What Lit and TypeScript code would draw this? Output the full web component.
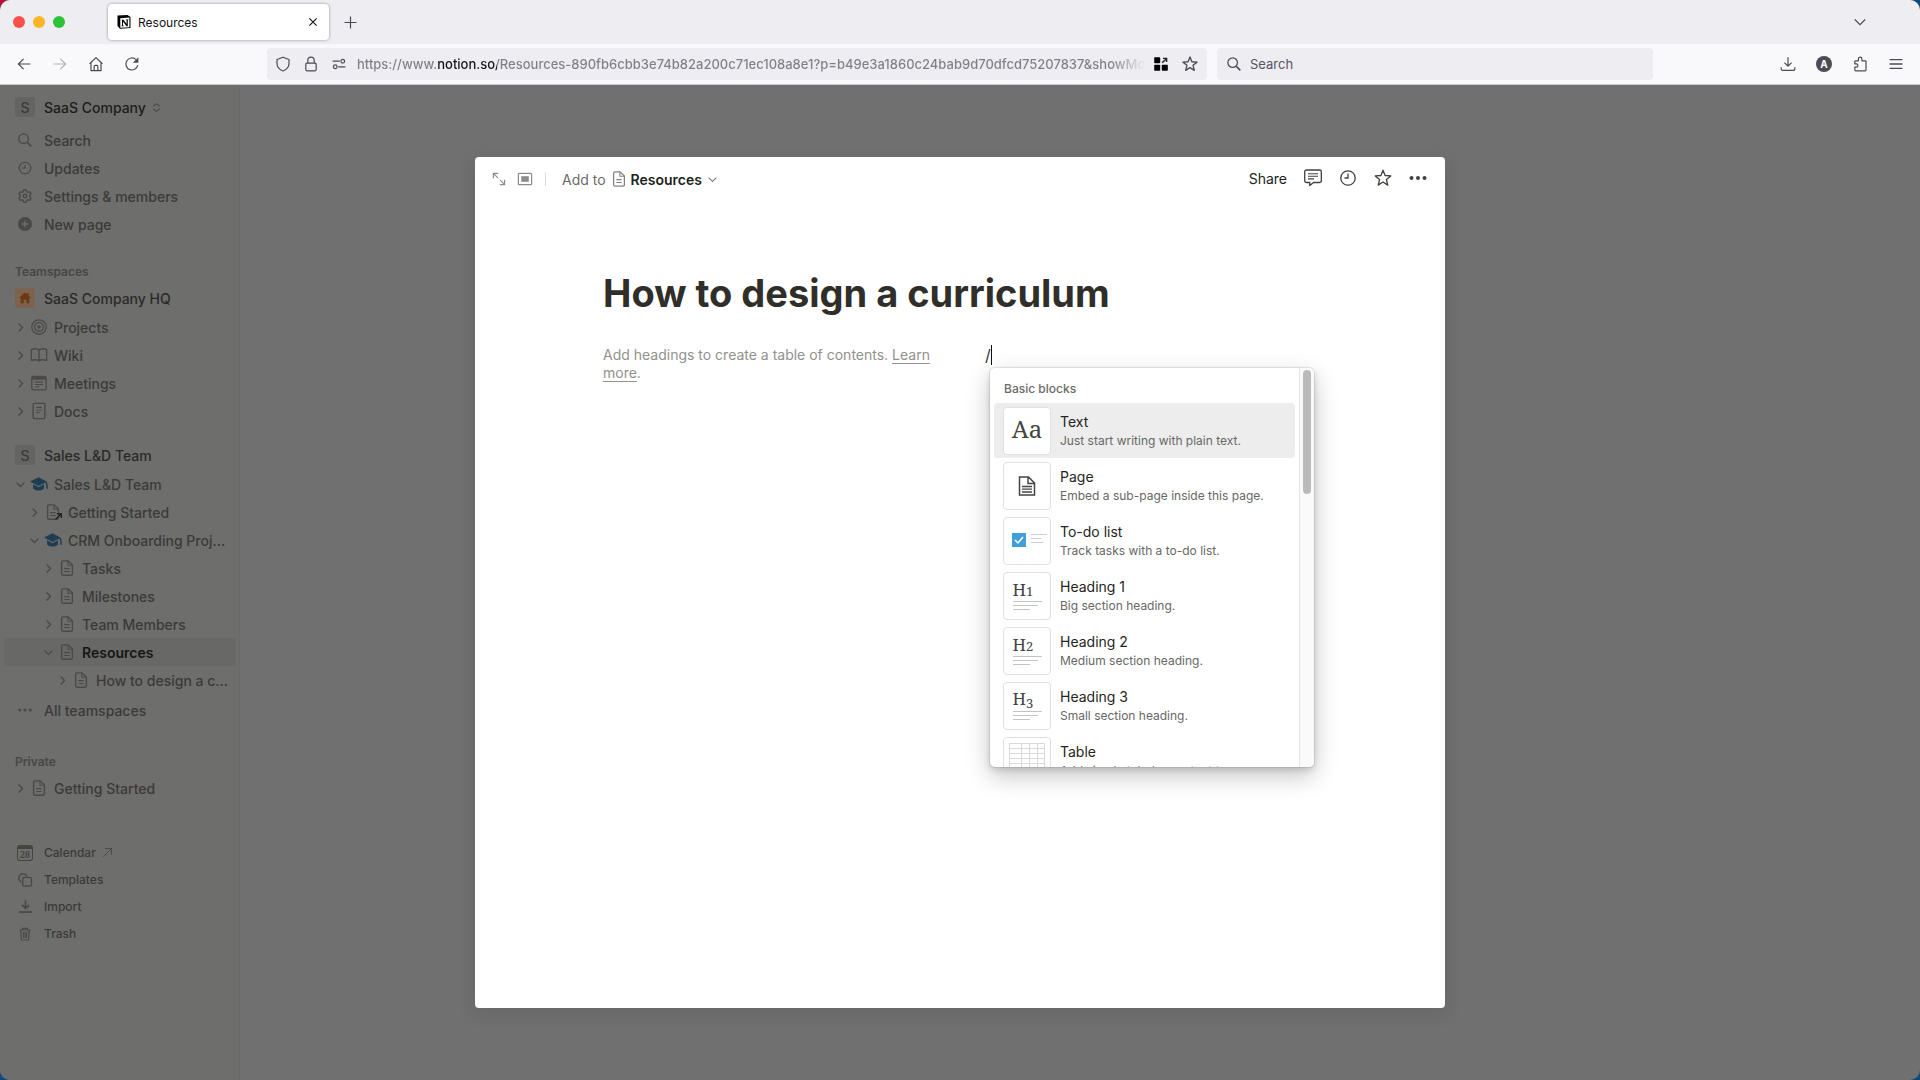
import { LitElement, html, svg, css, nothing, TemplateResult, SVGTemplateResult } from "lit";
import { customElement, property } from "lit/decorators.js";

const doc = svg`<path d="M5.500 2h5.700L16 6.800v9.700a1.500 1.500 0 0 1-1.500 1.500h-9A1.500 1.500 0 0 1 4 16.500v-13A1.500 1.500 0 0 1 5.500 2z"/><path d="M11 2.300V7h4.700M7 10.700h6M7 13.900h6" stroke-width="1.200"/>`;
const cap = svg`<g fill="currentColor" stroke="none"><path d="M9.500 2.600 0 7.200l9.500 4.900 7.600-3.800c.8 1.800 1.200 4.200 1.100 7h1.700c0-3.500-.6-6.200-1.700-8z"/><path d="M3.500 10.300v4.600c1.500 1.600 3.500 2.400 6 2.400s4.500-.8 6-2.400v-4.600l-6 3.200z"/></g>`;
const clock = svg`<circle cx="10" cy="10" r="7.200"/><path d="M10 5.500V10H6.500"/>`;
const star = svg`<path d="M10 2.200l2.100 5.300 5.700.4-4.400 3.600 1.400 5.600L10 14l-4.800 3.100 1.400-5.600-4.400-3.600 5.700-.4z" stroke-linejoin="round"/>`;

const icons: Record<string, SVGTemplateResult> = {
  doc,
  cap,
  clock,
  star,
  search: svg`<circle cx="8.500" cy="8.500" r="5.300"/><path d="M12.500 12.500 17 17" stroke-width="1.900"/>`,
  gear: svg`<path d="M8.700 3h2.600l.6 2 1.500.9 2-.5 1.300 2.200-1.400 1.600v1.700l1.400 1.500-1.300 2.300-2-.5-1.500.9-.6 2H8.700l-.6-2-1.500-.9-2 .5-1.300-2.300 1.400-1.500V9.200L3.300 7.600l1.300-2.200 2 .5L8.100 5z" stroke-linejoin="round"/><circle cx="10" cy="10.050" r="2"/>`,
  plusDisc: svg`<circle cx="10" cy="10" r="7" fill="currentColor" stroke="none"/><path d="M10 6.800v6.400M6.800 10h6.400" stroke="#6e6e6d" stroke-width="1.500"/>`,
  target: svg`<circle cx="10" cy="10" r="8"/><circle cx="10" cy="10" r="4.800"/><circle cx="10" cy="10" r="1.900" fill="currentColor" stroke="none"/>`,
  book: svg`<path d="M10 4.600C8 3 4.500 2.800 1.500 4v12c3-1 6.500-.9 8.500.6 2-1.500 5.500-1.600 8.500-.6V4c-3-1.200-6.500-1-8.500.6zM10 4.600v12" stroke-linejoin="round"/>`,
  meeting: svg`<rect x="2" y="2.800" width="16" height="14.900" rx="2"/><path d="M2.500 4.800h15" stroke-width="3.200"/><path d="M5.500 9h9M5.500 11.600h9M5.500 14.200h5" stroke-width="1.200"/>`,
  paper: svg`<rect x="3.500" y="1.500" width="13" height="17" rx="1.500"/><path d="M7 6h6M7 8.800h6M7 11.600h3.500" stroke-width="1.200"/>`,
  chevron: svg`<path d="M7.500 4.800 12.700 10l-5.200 5.200"/>`,
  chevronDown: svg`<path d="M4.800 7.500 10 12.700l5.200-5.200"/>`,
  updown: svg`<path d="M4 7.800 10 3l6 4.800M4 12.200l6 4.800 6-4.800"/>`,
  dots: svg`<g fill="currentColor" stroke="none"><circle cx="3.500" cy="10" r="2"/><circle cx="10" cy="10" r="2"/><circle cx="16.500" cy="10" r="2"/></g>`,
  stack: svg`<path d="M6 12.300A4.800 4.800 0 1 1 12.300 6"/><rect x="7.500" y="7" width="9.700" height="9.700" rx="1.800"/>`,
  importArrow: svg`<path d="M10 2.500v9.300M5.800 8 10 12.200 14.200 8" stroke-width="2"/><path d="M2.500 16.500h15" stroke-width="2"/>`,
  trash: svg`<path d="M3 5h14M7 4.800V3h6v1.800M4.700 5l.7 12.500h9.200L15.300 5"/><path d="M8 7.500v7.500M10 7.500v7.500M12 7.500v7.500" stroke-width="1.300"/>`,
  external: svg`<path d="M3.500 16.500 16 4M6.500 3.800H16.200v9.700"/>`,
  house: svg`<path d="M10 2 1.500 9.600h2.300V17.500h4.400v-5h3.600v5h4.400V9.600h2.300L15.500 6.900V3h-2.400v1.800z" fill="currentColor" stroke="none"/>`,
  expand: svg`<path d="M3 9V3h6M3.300 3.300 8.500 8.500M17 11v6h-6M16.700 16.700 11.500 11.500"/>`,
  peek: svg`<rect x="1.700" y="3" width="16.600" height="14" rx="1.200"/><rect x="5.300" y="6.500" width="9.400" height="7" fill="currentColor" stroke="none"/>`,
  comment: svg`<path d="M3.500 2h13a1.800 1.800 0 0 1 1.800 1.800v8.900a1.800 1.800 0 0 1-1.800 1.800h-6l-3.700 3v-3H3.500a1.800 1.800 0 0 1-1.800-1.800V3.800A1.800 1.800 0 0 1 3.500 2z" stroke-linejoin="round"/><path d="M5 5.700h10M5 8.300h10M5 10.900h6" stroke-width="1.100"/>`,
  back: svg`<path d="M18 10H3M9.500 3.500 3 10l6.500 6.500"/>`,
  forward: svg`<path d="M2 10h15M10.500 3.500 17 10l-6.500 6.500"/>`,
  home: svg`<path d="M2 9.700 10 2l8 7.700M3.700 8.500v9.700h12.600V8.500M7.700 18v-5a1.200 1.200 0 0 1 1.200-1.200h2.200a1.200 1.200 0 0 1 1.200 1.200v5" stroke-linejoin="round"/>`,
  reload: svg`<path d="M17.200 11.500A7.500 7.500 0 1 1 15 4.500"/><path d="M18 1.500v7h-7z" fill="currentColor" stroke="none"/>`,
  shield: svg`<path d="M10 1.500 2.500 4.300v5c0 4.200 3.200 7.600 7.500 9.400 4.300-1.800 7.500-5.200 7.500-9.400v-5z" stroke-linejoin="round"/>`,
  lock: svg`<rect x="3.500" y="8.800" width="13" height="9.700" rx="1.500"/><path d="M6 9V5.500a4 4 0 0 1 8 0V9"/>`,
  sliders: svg`<path d="M2 6.500h9M9 13.500h9"/><circle cx="14.700" cy="6.500" r="2.300"/><circle cx="5.300" cy="13.500" r="2.300"/>`,
  apps: svg`<g fill="#000" stroke="none"><rect x="1.500" y="1.500" width="7.500" height="7.500" rx="1"/><rect x="1.500" y="11" width="7.500" height="7.500" rx="1"/><rect x="11" y="11" width="7.500" height="7.500" rx="1"/></g><path d="M11.500 8.500 17 3M12.500 3H17v4.500" stroke="#222" stroke-width="1.800"/>`,
  download: svg`<path d="M10 1.500v11M5.500 8.200 10 12.700l4.500-4.500M1.500 14v2.200A1.800 1.800 0 0 0 3.300 18h13.400a1.800 1.800 0 0 0 1.800-1.800V14"/>`,
  puzzle: svg`<path d="M8 6V3.700a2.200 2.200 0 0 1 4.400 0V6H16.500a1 1 0 0 1 1 1v10.500a1 1 0 0 1-1 1H4.500a1 1 0 0 1-1-1v-3.700h1.900a2 2 0 0 0 0-4H3.500V7a1 1 0 0 1 1-1z" stroke-linejoin="round"/>`,
  menu: svg`<path d="M2 4.500h16M2 10h16M2 15.500h16"/>`,
  close: svg`<path d="M4 4l12 12M16 4 4 16"/>`,
  plus: svg`<path d="M10 2v16M2 10h16"/>`,
};

const icon = (name: string, size = 16, width = 1.5): TemplateResult => html`
  <svg width=${size} height=${size} viewBox="0 0 20 20" fill="none" stroke="currentColor" stroke-width=${width} aria-hidden="true">${icons[name]}</svg>`;

const shared = css`
  * { box-sizing: border-box; }
  button, input, a { font: inherit; color: inherit; }
  button { border: 0; padding: 0; background: none; display: inline-flex; align-items: center; justify-content: center; }
  svg { display: block; flex: none; }
`;

@customElement("browser-chrome")
class BrowserChrome extends LitElement {
  static styles = [shared, css`
    :host { display: block; color: #4c4b54; font-size: 13px; }
    .tabs { height: 44px; background: #eeedf2; display: flex; align-items: center; padding: 0 50px 0 13px; }
    .lights { display: flex; gap: 8px; width: 95px; }
    .light { width: 12px; height: 12px; border-radius: 50%; }
    .red { background: #f9524c; }
    .amber { background: #fcb427; }
    .green { background: #2ec23b; }
    .tab { width: 221px; height: 36px; border-radius: 4px; background: #fff; box-shadow: 0 0 3px rgba(0, 0, 0, .4); display: flex; align-items: center; gap: 6px; padding: 0 8px; color: #15141a; font-size: 12px; }
    .tab .name { flex: 1; }
    .close { width: 16px; height: 16px; }
    .plus { width: 20px; height: 20px; margin-left: 11px; }
    .list { margin-left: auto; width: 20px; height: 20px; }
    .bar { height: 40px; background: #f9f9fb; display: grid; grid-template-columns: 257px 940fr 436fr 257px; column-gap: 10px; align-items: center; }
    .group { display: flex; align-items: center; gap: 20px; padding-left: 16px; }
    .group.end { justify-content: flex-end; padding: 0 16px 0 0; }
    .faded { opacity: .4; }
    .field { height: 32px; border-radius: 4px; background: #eeedf2; display: flex; align-items: center; padding: 0 8px; gap: 12px; min-width: 0; }
    .field input { flex: 1; min-width: 0; border: 0; padding: 0; outline: 0; background: none; height: 24px; }
    .field .address { margin: 0 -4px 0 -2px; font-weight: 500; color: transparent; background: linear-gradient(90deg, #807f87 0 80px, #15141a 80px 140px, #807f87 140px calc(100% - 34px), transparent); background-clip: text; -webkit-background-clip: text; }
    .field.find { gap: 7px; }
    .field.find input::placeholder { color: #56555e; opacity: 1; }
    .account { width: 16px; height: 16px; border-radius: 50%; background: #4c4b54; color: #fff; font-size: 10px; font-weight: 700; }
  `];

  render() {
    return html`
      <div class="tabs">
        <div class="lights"><span class="light red"></span><span class="light amber"></span><span class="light green"></span></div>
        <div class="tab">
          <svg width="16" height="16" viewBox="0 0 16 16" aria-hidden="true">
            <path d="M1.500 1.500 11.500 1l3 2v11l-10.500.8L1.500 12z" fill="#000"/>
            <path d="M4.300 4.200 13.400 3.600v9.600l-9.100.6z" fill="#fff"/>
            <path d="M5.500 5.700h2L10.600 10V6.200l-.8-.2v-.6h2.700v.6l-.7.3v5.900h-1.300L7 7.500v4l.8.300v.5H5.400v-.5l.6-.3V6.500z" fill="#000"/>
          </svg>
          <span class="name">Resources</span>
          <button class="close" aria-label="Close tab">${icon("close", 12, 1.900)}</button>
        </div>
        <button class="plus" aria-label="New tab">${icon("plus", 15, 1.600)}</button>
        <button class="list" aria-label="List tabs">${icon("chevronDown", 20, 1.200)}</button>
      </div>
      <div class="bar">
        <div class="group">
          <button aria-label="Back">${icon("back")}</button>
          <button class="faded" aria-label="Forward">${icon("forward")}</button>
          <button aria-label="Home">${icon("home")}</button>
          <button aria-label="Reload">${icon("reload")}</button>
        </div>
        <div class="field">
          ${icon("shield")}${icon("lock")}${icon("sliders")}
          <input class="address" aria-label="Address" value="https://www.notion.so/Resources-890fb6cbb3e74b82a200c71ec108a8e1?p=b49e3a1860c24bab9d70dfcd75207837&showMoveTo=true" />
          <button aria-label="Extension">${icon("apps")}</button>
          <button aria-label="Bookmark">${icon("star", 18)}</button>
        </div>
        <div class="field find">${icon("search", 18, 1.400)}<input aria-label="Search" placeholder="Search" /></div>
        <div class="group end">
          <button aria-label="Downloads">${icon("download")}</button>
          <button class="account" aria-label="Account">A</button>
          <button aria-label="Extensions">${icon("puzzle")}</button>
          <button aria-label="Menu">${icon("menu", 16, 1.700)}</button>
        </div>
      </div>`;
  }
}

interface TreeItem { label: string; icon: string; level: number; open?: boolean; selected?: boolean; blue?: boolean; shortcut?: boolean; }

const company: TreeItem[] = [
  { label: "Projects", icon: "target", level: 0 },
  { label: "Wiki", icon: "book", level: 0 },
  { label: "Meetings", icon: "meeting", level: 0 },
  { label: "Docs", icon: "paper", level: 0 },
];
const sales: TreeItem[] = [
  { label: "Sales L&D Team", icon: "cap", level: 0, open: true, blue: true },
  { label: "Getting Started", icon: "doc", level: 1, shortcut: true },
  { label: "CRM Onboarding Proj…", icon: "cap", level: 1, open: true, blue: true },
  { label: "Tasks", icon: "doc", level: 2 },
  { label: "Milestones", icon: "doc", level: 2 },
  { label: "Team Members", icon: "doc", level: 2 },
  { label: "Resources", icon: "doc", level: 2, open: true, selected: true },
  { label: "How to design a c…", icon: "doc", level: 3 },
];

@customElement("side-bar")
class SideBar extends LitElement {
  static styles = [shared, css`
    :host { display: block; background: #6e6e6d; border-right: 1px solid #6a6a6a; padding: 8px 3px 72px 4px; color: #3b3a38; font-size: 14px; font-weight: 500; }
    nav { display: flex; flex-direction: column; }
    .row { height: 28px; width: 100%; padding-left: 10px; display: flex; justify-content: flex-start; align-items: center; gap: 8px; text-decoration: none; white-space: nowrap; border-radius: 3px; }
    .slot { width: 22px; display: flex; justify-content: center; color: #4a4947; flex: none; }
    .with-mark { display: flex; align-items: center; gap: 5px; }
    .with-mark svg { color: #4a4947; }
    .strong { color: #2b2a28; margin-bottom: 1px; }
    .company { color: #1d1c1b; margin-bottom: 5px; }
    .badge { width: 20px; height: 20px; border-radius: 3px; background: #646463; color: #3b3a38; display: flex; align-items: center; justify-content: center; margin: 0 1px; }
    .badge.hq { background: #7b6350; color: #6d3914; }
    h2 { margin: 0 0 0 11px; height: 24px; line-height: 24px; font-size: 12px; font-weight: 600; color: #484745; }
    .teams { margin-top: 22px; }
    .team { margin-top: 16px; }
    .all { margin-top: 2px; }
    .private { margin-top: 26px; }
    .tree .row { gap: 0; padding-left: 8px; }
    .twist { width: 16px; display: flex; justify-content: center; color: #4a4947; }
    .tree .slot { margin-right: 4px; position: relative; }
    .tree .blue { color: #1c3d52; }
    .selected { background: #686867; }
    .selected .text { color: #161615; font-weight: 600; }
    .arrow { position: absolute; right: 1px; bottom: 0; color: #111; }
    .foot { margin-top: 37px; }
    .foot .row { height: 27px; font-size: 12px; }
    .date { width: 16px; height: 16px; border: 1px solid #45443f; border-top-width: 4px; border-radius: 3px; font: 700 10px/11px "Liberation Serif", serif; text-align: center; color: #45443f; }
  `];

  private tree(items: TreeItem[]) {
    return html`<div class="tree">${items.map((i) => html`
      <a class="row ${i.selected ? "selected" : ""}" href="#" style="padding-left:${8 + 14 * i.level}px">
        <span class="twist">${icon(i.open ? "chevronDown" : "chevron", 15, 1.800)}</span>
        <span class="slot ${i.blue ? "blue" : ""}">${icon(i.icon, 18, 1.500)}${i.shortcut ? html`<span class="arrow">${icon("external", 9, 2.500)}</span>` : nothing}</span>
        <span class="text">${i.label}</span>
      </a>`)}</div>`;
  }

  private link(name: string, label: string, size = 16) {
    return html`<a class="row" href="#"><span class="slot">${icon(name, size)}</span>${label}</a>`;
  }

  render() {
    return html`<nav>
      <button class="row company"><span class="badge">S</span><span class="with-mark">SaaS Company${icon("updown", 11, 2)}</span></button>
      ${this.link("search", "Search", 18)}
      ${this.link("clock", "Updates")}
      ${this.link("gear", "Settings & members", 18)}
      ${this.link("plusDisc", "New page", 20)}
      <h2 class="teams">Teamspaces</h2>
      <a class="row strong" href="#"><span class="badge hq">${icon("house", 14)}</span>SaaS Company HQ</a>
      ${this.tree(company)}
      <a class="row strong team" href="#"><span class="badge">S</span>Sales L&amp;D Team</a>
      ${this.tree(sales)}
      <a class="row all" href="#"><span class="slot">${icon("dots")}</span>All teamspaces</a>
      <h2 class="private">Private</h2>
      ${this.tree([{ label: "Getting Started", icon: "doc", level: 0 }])}
      <div class="foot">
        <a class="row" href="#"><span class="slot"><span class="date">28</span></span><span class="with-mark">Calendar${icon("external", 13, 1.500)}</span></a>
        ${this.link("stack", "Templates", 18)}
        ${this.link("importArrow", "Import", 17)}
        ${this.link("trash", "Trash")}
      </div>
    </nav>`;
  }
}

interface Block { name: string; hint: string; art: TemplateResult; }

const heading = (n: number) => html`<span class="head">H<span class="digit d${n}">${n}</span></span><span class="rules"><i></i><i></i><i></i></span>`;

const blocks: Block[] = [
  { name: "Text", hint: "Just start writing with plain text.", art: html`<span class="aa">Aa</span>` },
  { name: "Page", hint: "Embed a sub-page inside this page.", art: html`<svg width="18" height="20" viewBox="0 0 18 20" fill="none" stroke="#444" stroke-width="1.500" aria-hidden="true"><path d="M1.500 1h9l6 6v12h-15zM10 1v6.500h6.500"/><path d="M4 10.500h10M4 13.200h10M4 16h10" stroke-width="1.300"/></svg>` },
  { name: "To-do list", hint: "Track tasks with a to-do list.", art: html`<svg width="46" height="46" viewBox="0 0 46 46" fill="none" aria-hidden="true"><rect x="8" y="15" width="14" height="14" fill="#439fdb"/><path d="M11 22l3 3 5-6" stroke="#fff" stroke-width="1.500"/><path d="M27 16.500h16M27 20.500h10M27 24.500h12" stroke="#d0d0d0"/></svg>` },
  { name: "Heading 1", hint: "Big section heading.", art: heading(1) },
  { name: "Heading 2", hint: "Medium section heading.", art: heading(2) },
  { name: "Heading 3", hint: "Small section heading.", art: heading(3) },
  { name: "Table", hint: "Add simple tabular content to your page.", art: html`<svg width="46" height="46" viewBox="0 0 46 46" fill="none" stroke="#d9d9d9" aria-hidden="true"><path d="M5.500 5.500h35v35h-35zM17.500 5.500v35M25.500 5.500v35M33.500 5.500v35M5.500 10.500h35M5.500 15.500h35M5.500 20.500h35M5.500 25.500h35M5.500 30.500h35"/></svg>` },
];

@customElement("block-menu")
class BlockMenu extends LitElement {
  @property({ type: Number }) active = 0;

  static styles = [shared, css`
    :host { display: flex; width: 324px; height: 399px; overflow: hidden; background: #fff; border-radius: 5px; box-shadow: 0 0 0 1px rgba(15, 15, 15, .08), 0 3px 6px rgba(15, 15, 15, .14), 0 9px 24px rgba(15, 15, 15, .24); }
    .list { flex: 1; min-width: 0; padding: 10px 4px; display: flex; flex-direction: column; }
    h3 { margin: 0 0 3px 10px; height: 22px; line-height: 22px; font-size: 12px; font-weight: 500; color: #6b6a68; flex: none; }
    button { height: 55px; flex: none; justify-content: flex-start; gap: 9px; padding: 0 9px; border-radius: 4px; text-align: left; white-space: nowrap; }
    .active { background: #ededed; }
    .art { width: 48px; height: 48px; flex: none; border: 1px solid #e0e0df; border-radius: 4px; background: #fff; display: flex; flex-direction: column; align-items: center; justify-content: center; overflow: hidden; color: #444; font-family: "Noto Serif", Georgia, "Liberation Serif", serif; }
    .aa { font-size: 24px; line-height: 24px; padding-bottom: 4px; }
    .head { font-size: 17px; line-height: 16px; width: 29px; margin-bottom: 3px; }
    .digit { font-size: 13px; line-height: 10px; }
    .d3 { vertical-align: -3px; }
    .rules { width: 29px; display: flex; flex-direction: column; gap: 3px; }
    .rules i { height: 1px; background: #c4c4c4; }
    .rules i:nth-child(2) { width: 25px; }
    .rules i:nth-child(3) { width: 17px; }
    .words { display: flex; flex-direction: column; }
    .name { font-size: 14px; line-height: 20px; color: #262522; }
    .hint { font-size: 12px; line-height: 18px; color: #686765; }
    .track { width: 15px; flex: none; border-left: 1px solid #e6e6e6; background: #fafafa; padding: 2px 3px; }
    .thumb { height: 124px; border-radius: 4px; background: #bababa; }
  `];

  render() {
    return html`
      <div class="list" role="menu">
        <h3>Basic blocks</h3>
        ${blocks.map((b, i) => html`
          <button role="menuitem" class=${i === this.active ? "active" : ""}>
            <span class="art">${b.art}</span>
            <span class="words"><span class="name">${b.name}</span><span class="hint">${b.hint}</span></span>
          </button>`)}
      </div>
      <div class="track"><div class="thumb"></div></div>`;
  }
}

@customElement("page-dialog")
class PageDialog extends LitElement {
  static styles = [shared, css`
    :host { display: block; background: #fff; border-radius: 4px; color: #37352f; box-shadow: 0 5px 20px rgba(15, 15, 15, .1); }
    header { height: 44px; display: flex; align-items: center; padding: 0 17px 0 16px; font-size: 14px; }
    .tool { color: #8d8c89; width: 16px; height: 16px; margin-right: 10px; }
    .sep { width: 1px; height: 14px; background: #dcdcdb; margin: 0 16px 0 2px; }
    .add { color: #6d6c69; margin-right: 4px; }
    .where { gap: 3px; color: #201f1c; font-weight: 600; }
    .where svg { color: #83827f; }
    .actions { margin-left: auto; display: flex; align-items: center; gap: 15px; padding-bottom: 2px; color: #42413d; }
    .share { color: #201f1c; margin-right: 1px; }
    .actions button { height: 28px; }
    .body { padding: 68px 126px 96px; }
    h1 { margin: 0; padding-left: 2px; font-size: 38px; line-height: 48px; font-weight: 700; color: #2f2e29; }
    .columns { display: grid; grid-template-columns: 1fr 1fr; column-gap: 46px; margin-top: 26px; }
    .toc { margin: 0; padding: 3px 2px; font-size: 14px; line-height: 18px; color: #92918e; }
    .toc a { text-underline-offset: 3px; }
    .slash { position: relative; height: 24px; padding-left: 2px; display: flex; align-items: center; font-size: 16px; }
    .caret { width: 1px; height: 20px; background: #111; }
    block-menu { position: absolute; left: 7px; top: 25px; }
  `];

  render() {
    return html`
      <header>
        <button class="tool" aria-label="Open as full page">${icon("expand", 16, 1.500)}</button>
        <button class="tool" aria-label="Switch peek mode">${icon("peek", 16)}</button>
        <span class="sep"></span>
        <span class="add">Add to</span>
        <button class="where">${icon("doc", 18, 1.400)}Resources${icon("chevronDown", 15, 1.600)}</button>
        <div class="actions">
          <button class="share">Share</button>
          <button aria-label="Comments">${icon("comment", 20, 1.300)}</button>
          <button aria-label="Updates">${icon("clock", 20, 1.300)}</button>
          <button aria-label="Favorite">${icon("star", 20, 1.300)}</button>
          <button aria-label="More">${icon("dots", 20)}</button>
        </div>
      </header>
      <div class="body">
        <h1>How to design a curriculum</h1>
        <div class="columns">
          <p class="toc">Add headings to create a table of contents. <a href="#">Learn more</a>.</p>
          <div class="slash">/<span class="caret"></span><block-menu></block-menu></div>
        </div>
      </div>`;
  }
}

@customElement("app-root")
class AppRoot extends LitElement {
  static styles = [shared, css`
    :host { display: block; min-height: 100vh; background: radial-gradient(circle at 0 0, #b3123c 0 20px, transparent 21px), #0d4a80; font-family: Inter, "Liberation Sans", sans-serif; }
    .window { min-height: 100vh; border-radius: 10px; overflow: hidden; display: flex; flex-direction: column; background: #707070; }
    .space { flex: 1; display: grid; grid-template-columns: 240px 1fr; border-top: 1px solid #c9caca; }
    side-bar { grid-area: 1 / 1; }
    page-dialog { grid-area: 1 / 1 / 2 / 3; justify-self: center; width: min(970px, 100% - 144px); margin: 72px 0; }
  `];

  render() {
    return html`<div class="window">
      <browser-chrome></browser-chrome>
      <main class="space"><side-bar></side-bar><page-dialog></page-dialog></main>
    </div>`;
  }
}
